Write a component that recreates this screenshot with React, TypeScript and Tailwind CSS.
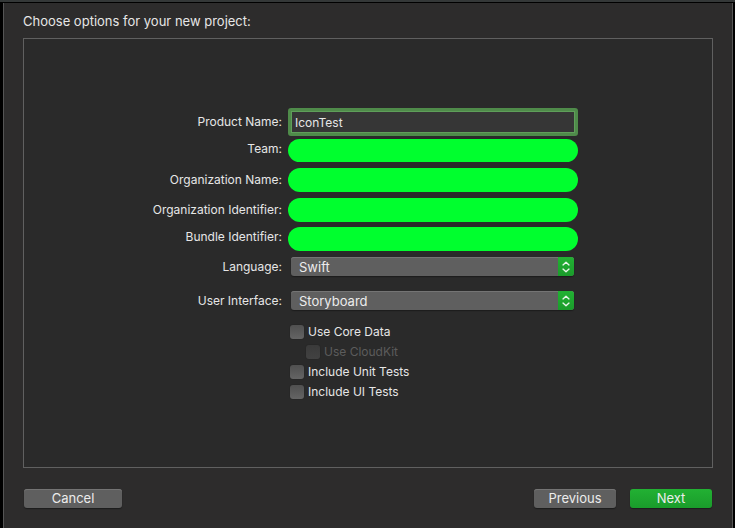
import { useState } from "react";
import type { ReactNode } from "react";

type RowProps = {
  id: string;
  label: string;
  className?: string;
  children: ReactNode;
};

function Row({ id, label, className = "items-center", children }: RowProps) {
  return (
    <div className={`grid grid-cols-[minmax(0,1fr)_290px] gap-x-1.5 ${className}`}>
      <label htmlFor={id} className="text-right leading-5 whitespace-nowrap">
        {label}
      </label>
      {children}
    </div>
  );
}

// Stepper arrows at the right end of a pop-up button
function Chevrons() {
  return (
    <span className="pointer-events-none flex h-[19px] w-4 items-center justify-center rounded-r-[3px] bg-linear-to-b from-[#22b133] to-[#1a9c2b]">
      <svg width="8" height="12" viewBox="0 0 8 12" fill="none" stroke="#e8f6ea" strokeWidth="1.4" strokeLinecap="round" strokeLinejoin="round">
        <path d="M1 3.9 4 1.2 7 3.9M1 8.1 4 10.8 7 8.1" />
      </svg>
    </span>
  );
}

function Popup({ id, options }: { id: string; options: string[] }) {
  return (
    <div className="ml-[3px] mr-1 flex h-[19px] rounded-[3px] bg-[#5f5f5f] shadow-[inset_0_1px_0_#747474,0_1px_1px_#1c1c1c]">
      <select id={id} className="h-[19px] min-w-0 flex-1 appearance-none bg-transparent pt-0.5 pl-2 text-[13px] leading-[17px] text-[#ececec] outline-none">
        {options.map((o) => (
          <option key={o} className="bg-[#5f5f5f]">
            {o}
          </option>
        ))}
      </select>
      <Chevrons />
    </div>
  );
}

type CheckProps = { label: string; disabled?: boolean };

function Check({ label, disabled = false }: CheckProps) {
  return (
    <label className={disabled ? "ml-4 flex h-5 items-center gap-1 text-[#5c5c5c]" : "flex h-5 items-center gap-1"}>
      <input
        type="checkbox"
        disabled={disabled}
        className="size-3.5 appearance-none rounded-[3px] bg-linear-to-b from-[#505050] to-[#646464] shadow-[0_0_1px_#1c1c1c] checked:from-[#22b133] checked:to-[#1a9c2b] disabled:from-[#3a3a3a] disabled:to-[#424242]"
      />
      {label}
    </label>
  );
}

const BUTTON = "h-[19px] rounded-[3px] text-[13px] leading-[19px] text-[#ececec]";
const GRAY = "bg-[#5f5f5f] shadow-[inset_0_1px_0_#747474,0_1px_1px_#1c1c1c]";
const HIDDEN = "w-full appearance-none rounded-full bg-[#00ff2e] text-transparent outline-none";

export default function App() {
  const [name, setName] = useState("IconTest");

  return (
    <div className="flex min-h-screen flex-col border-t-2 border-[#343838] bg-black pr-0.5 pl-[3px] font-[Inter,sans-serif] text-[12px] text-[#e6e6e6]">
      <main className="mt-px flex flex-1 flex-col border-x border-[#555555] bg-[#2d2c2c] px-[19px] pb-5">
        <h1 className="pt-[9px] pb-[7px] text-[13px] leading-[19px]">Choose options for your new project:</h1>

        <section className="flex flex-1 flex-col border border-[#606060] bg-[#2a2a2a] pt-[69px] pr-[134px] pb-8">
          <Row id="name" label="Product Name:">
            <input
              id="name"
              value={name}
              onChange={(e) => setName(e.target.value)}
              className="h-7 w-full rounded-[3px] border-[3px] border-[#4f8b4a] bg-[#363636] px-1 outline-1 -outline-offset-4 outline-[#5f9f5a]"
            />
          </Row>
          <Row id="team" label="Team:" className="mt-[3px] items-start">
            <select id="team" className={`h-[23px] ${HIDDEN}`} />
          </Row>
          <Row id="org" label="Organization Name:" className="mt-1.5 items-center">
            <input id="org" className={`h-6 ${HIDDEN}`} />
          </Row>
          <Row id="org-id" label="Organization Identifier:" className="mt-1.5 items-center">
            <input id="org-id" className={`h-6 ${HIDDEN}`} />
          </Row>
          <Row id="bundle" label="Bundle Identifier:" className="mt-[5px] items-start">
            <input id="bundle" readOnly className={`h-6 ${HIDDEN}`} />
          </Row>
          <Row id="language" label="Language:" className="mt-1.5 items-start">
            <Popup id="language" options={["Swift", "Objective-C"]} />
          </Row>
          <Row id="ui" label="User Interface:" className="mt-3.5 items-start">
            <Popup id="ui" options={["Storyboard", "SwiftUI"]} />
          </Row>

          <div className="mt-[11px] grid grid-cols-[minmax(0,1fr)_288px]">
            <div className="col-start-2">
              <Check label="Use Core Data" />
              <Check label="Use CloudKit" disabled />
              <Check label="Include Unit Tests" />
              <Check label="Include UI Tests" />
            </div>
          </div>
        </section>

        <footer className="mt-[21px] flex gap-3.5 px-px">
          <button className={`mr-auto w-[98px] ${BUTTON} ${GRAY}`}>Cancel</button>
          <button className={`w-[82px] ${BUTTON} ${GRAY}`}>Previous</button>
          <button className={`w-[82px] bg-linear-to-b from-[#22b133] to-[#1a9c2b] shadow-[0_1px_1px_#1c1c1c] ${BUTTON}`}>
            Next
          </button>
        </footer>
      </main>
    </div>
  );
}
